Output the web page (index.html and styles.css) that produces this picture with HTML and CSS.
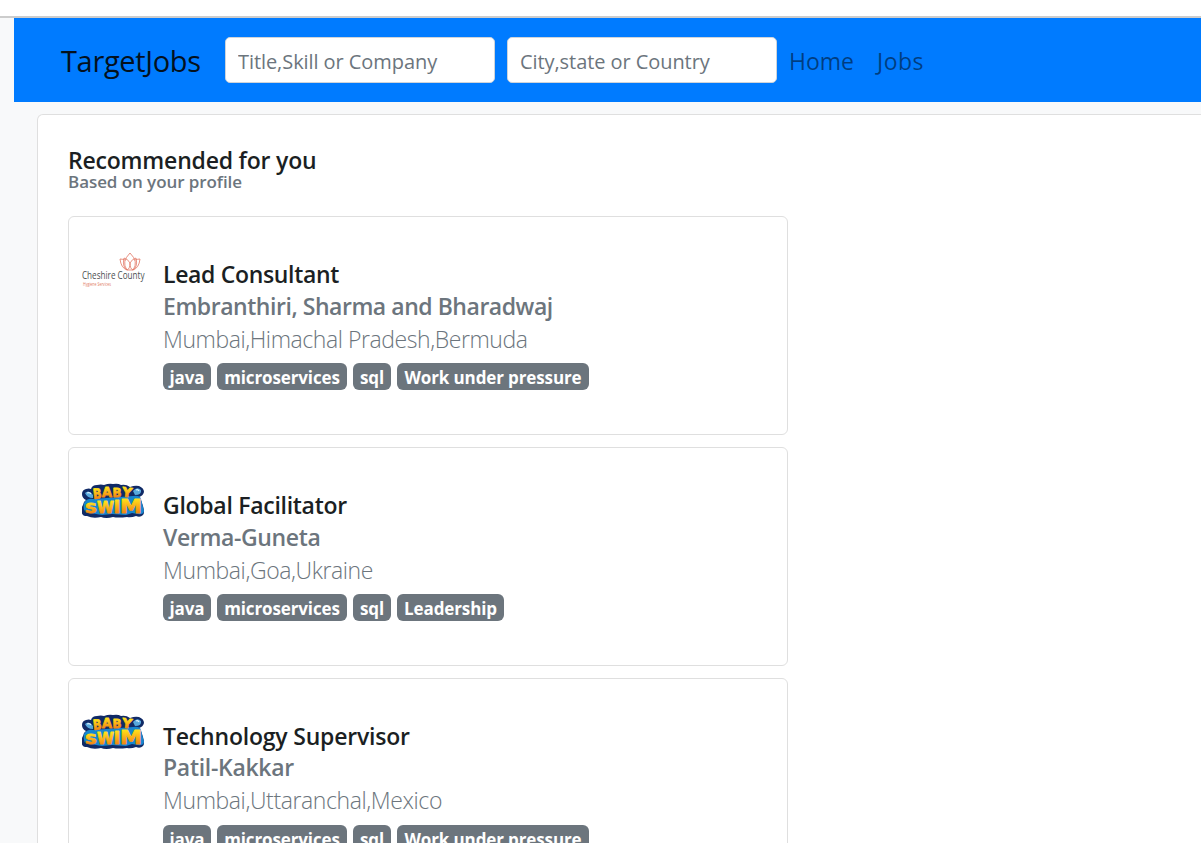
FILE: index.html
```html
<!DOCTYPE html>
<html lang="en">
<head>
<meta charset="utf-8">
<title>TargetJobs</title>
<link rel="stylesheet" href="styles.css">
</head>
<body>
<svg class="defs" width="0" height="0" aria-hidden="true">
  <defs>
    <linearGradient id="gold" x1="0" y1="0" x2="0" y2="1">
      <stop offset="0.2" stop-color="#ffe11a"/><stop offset="0.5" stop-color="#fcb515"/><stop offset="0.8" stop-color="#f28a12"/>
    </linearGradient>
    <symbol id="swim" viewBox="0 0 64 36">
      <path d="M0 11q0-4 4-5q3-1 5 0q1-4 6-4q4-1 7 0q5-2 9-1q5-1 8 1q5-1 9 2q5-2 9-1q5 2 5 6q-1 4-5 5q3 4 4 9q2 7 0 9q-3 3-7 1q-5 2-9 1q-9 1-14 0q-7 2-12 0q-8 2-14-1q-6 0-5-5q-1-3 1-6q0-3 3-5q-4-2-4-6z" fill="#102a66"/>
      <path d="M2 20q3-5 9-4l40-3q7-1 8 3l3 12q-1 4-6 3l-6-1-6 2-14-1-10 1-12-2q-8 0-6-10z" fill="#1686cf"/>
      <path d="M3 10q4-4 8 2v3q-6 0-8-5zM51 8q4-5 8-1q1 5-6 5z" fill="#57a8dc"/>
      <path d="M5 10q3-1 4 1M54 7q2-1 3 1" fill="none" stroke="#d7f1fc" stroke-width="1.3"/>
      <g class="swim-text">
        <text x="11" y="15.5" font-size="14" textLength="8.5" lengthAdjust="spacingAndGlyphs" transform="rotate(-6 15 12)">B</text>
        <text x="20" y="14" font-size="14" textLength="10" lengthAdjust="spacingAndGlyphs">A</text>
        <text x="30.5" y="13.5" font-size="13" textLength="9" lengthAdjust="spacingAndGlyphs">B</text>
        <text x="40" y="14" font-size="13" textLength="10" lengthAdjust="spacingAndGlyphs" transform="rotate(8 45 10)">Y</text>
        <text x="3" y="29.5" font-size="14" textLength="12" lengthAdjust="spacingAndGlyphs">S</text>
        <text x="15" y="30" font-size="16" textLength="17" lengthAdjust="spacingAndGlyphs">W</text>
        <text x="31.5" y="29.5" font-size="18" textLength="7" lengthAdjust="spacingAndGlyphs">I</text>
        <text x="38" y="29.5" font-size="19" textLength="22" lengthAdjust="spacingAndGlyphs">M</text>
      </g>
    </symbol>
  </defs>
</svg>
<div class="browser-edge"></div>
<div class="page">
  <nav class="navbar">
    <a class="brand">TargetJobs</a>
    <input class="field" placeholder="Title,Skill or Company">
    <input class="field" placeholder="City,state or Country">
    <a class="nav-link home">Home</a>
    <a class="nav-link jobs">Jobs</a>
  </nav>
  <main class="panel">
    <h1 class="heading">Recommended for you</h1>
    <p class="subheading">Based on your profile</p>
    <div class="job-list">
      <article class="job consultant">
        <svg class="logo" viewBox="0 0 64 36">
          <path d="M48 1q-9 9-3 17h6q6-8-3-17zM42 6q-2 9 3 12q3-1 3-7q-2-4-6-5zM54 6q2 9-3 12q-3-1-3-7q2-4 6-5zM43 8q-3-1-5-1q1 9 7 11M53 8q3-1 5-1q-1 9-7 11" fill="none" stroke="#e27765" stroke-width=".8"/>
          <text class="county" x="0" y="27" textLength="62.5" lengthAdjust="spacingAndGlyphs">Cheshire County</text>
          <text class="hygiene" x="1" y="33.5" textLength="28" lengthAdjust="spacingAndGlyphs">Hygiene Services</text>
        </svg>
        <div class="details">
          <h2 class="title">Lead Consultant</h2>
          <p class="company">Embranthiri, Sharma and Bharadwaj</p>
          <p class="location">Mumbai,Himachal Pradesh,Bermuda</p>
          <div class="tags"><span class="tag java">java</span><span class="tag micro">microservices</span><span class="tag sql">sql</span><span class="tag pressure">Work under pressure</span></div>
        </div>
      </article>
      <article class="job facilitator">
        <svg class="logo"><use href="#swim"/></svg>
        <div class="details">
          <h2 class="title">Global Facilitator</h2>
          <p class="company">Verma-Guneta</p>
          <p class="location">Mumbai,Goa,Ukraine</p>
          <div class="tags"><span class="tag java">java</span><span class="tag micro">microservices</span><span class="tag sql">sql</span><span class="tag leadership">Leadership</span></div>
        </div>
      </article>
      <article class="job supervisor">
        <svg class="logo"><use href="#swim"/></svg>
        <div class="details">
          <h2 class="title">Technology Supervisor</h2>
          <p class="company">Patil-Kakkar</p>
          <p class="location">Mumbai,Uttaranchal,Mexico</p>
          <div class="tags"><span class="tag java">java</span><span class="tag micro">microservices</span><span class="tag sql">sql</span><span class="tag pressure">Work under pressure</span></div>
        </div>
      </article>
    </div>
  </main>
</div>
</body>
</html>
```
FILE: styles.css
```css
* { box-sizing: border-box; }
body { margin: 0; height: 843px; overflow: hidden; background: #f8f9fa; color: #212529; font-family: "Open Sans", "Noto Sans", sans-serif; }
h1, h2, p { margin: 0; white-space: nowrap; }
.defs { display: block; height: 0; }
.browser-edge { height: 18px; background: #fff; border-bottom: 2px solid #ccc; }
.page { padding-left: 14px; }
.navbar { display: flex; align-items: center; height: 84px; padding-left: 47px; background: #007bff; white-space: nowrap; }
.brand { width: 164px; font-size: 29px; letter-spacing: -.35px; color: #04111d; }
.field { width: 270px; height: 46px; margin-right: 12px; padding: 2px 12px 0; border: 1px solid #ced4da; border-radius: 5px; background: #fff; font: 20px "Open Sans", sans-serif; letter-spacing: -.07px; }
.field::placeholder { color: #6c757d; opacity: 1; }
.nav-link { padding-top: 2px; font-size: 23px; color: rgba(0, 0, 0, .5); }
.home { width: 88px; }
.jobs { letter-spacing: .5px; }
.panel { height: 729px; margin: 12px -2px 0 23px; padding: 31px 30px 0; border: 1px solid #dfdfdf; border-bottom: 0; border-radius: 6px 0 0 0; background: #fff; }
.heading { font-size: 23px; line-height: 28px; font-weight: 600; letter-spacing: -.2px; color: #1b1f23; }
.subheading { height: 42px; font-size: 17px; line-height: 16px; font-weight: 600; letter-spacing: -.07px; color: #6c757d; }
.job-list { display: grid; gap: 12px; width: 720px; }
.job { display: flex; height: 219px; padding: 35px 13px 0; border: 1px solid #dfdfdf; border-radius: 6px; }
.logo { width: 64px; height: 36px; margin-right: 17px; flex: none; }
.county { font: 11px "Open Sans", sans-serif; fill: #4c5052; }
.hygiene { font: 4.5px "Open Sans", sans-serif; fill: #e27765; }
.swim-text { font-family: "DejaVu Sans", sans-serif; font-weight: 700; fill: url(#gold); stroke: url(#gold); stroke-width: .8; stroke-linejoin: round; }
.details { padding-top: 6px; }
.title, .company { font-size: 23px; line-height: 32px; font-weight: 600; }
.title { color: #1b1f23; }
.company, .location { color: #6c757d; }
.location { font-size: 23px; line-height: 34px; font-weight: 300; }
.consultant .title { letter-spacing: -.33px; }
.consultant .company { letter-spacing: -.46px; }
.consultant .location { letter-spacing: -.43px; }
.facilitator .title { letter-spacing: -.28px; }
.facilitator .company { letter-spacing: -.36px; }
.facilitator .location { letter-spacing: -.4px; }
.supervisor .title { letter-spacing: -.2px; }
.supervisor .company { line-height: 31px; letter-spacing: -.3px; }
.supervisor .location { letter-spacing: -.4px; }
.tags { display: flex; gap: 6px; margin-top: 7px; }
.supervisor .tags { margin-top: 8px; }
.tag { display: flex; justify-content: center; height: 27px; border-radius: 6px; background: #6c757d; color: #fff; font-size: 17px; line-height: 29px; font-weight: 700; letter-spacing: -.12px; white-space: nowrap; }
.java { width: 48px; }
.micro { width: 130px; }
.sql { width: 38px; }
.pressure { width: 192px; }
.leadership { width: 107px; }
```
